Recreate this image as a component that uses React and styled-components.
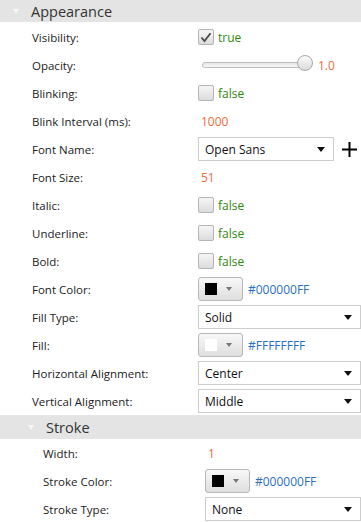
import React from "react";
import styled, { createGlobalStyle } from "styled-components";

const Global = createGlobalStyle`
  html, body { margin: 0; padding: 0; background: #fff; }
  body { font-family: "Open Sans", "Noto Sans", sans-serif; }
`;

const Panel = styled.div`
  width: 361px;
  height: 522px;
  overflow: hidden;
  background: #fff;
  display: flex;
  flex-direction: column;
`;

const Header = styled.div`
  height: ${(p) => p.$h}px;
  margin-bottom: ${(p) => p.$mb || 0}px;
  background: #e4e4e4;
  display: flex;
  align-items: center;
  padding-left: ${(p) => p.$indent}px;
  font-size: 14.5px;
  color: #333;
  flex-shrink: 0;
`;

const Arrow = styled.span`
  width: 0;
  height: 0;
  border-left: 3.5px solid transparent;
  border-right: 3.5px solid transparent;
  border-top: 5px solid #f6f6f6;
  margin-right: 12px;
`;

const Row = styled.div`
  height: 28px;
  display: grid;
  grid-template-columns: ${(p) => p.$label}px 1fr;
  align-items: center;
  padding-left: ${(p) => p.$indent}px;
  flex-shrink: 0;
`;

const Label = styled.span`
  font-size: 11.5px;
  color: #222;
`;

const Control = styled.div`
  display: flex;
  align-items: center;
  gap: 4px;
  min-width: 0;
`;

const Check = styled.span`
  width: 14px;
  height: 14px;
  border: 1px solid #b4b4b4;
  border-radius: 2px;
  background: linear-gradient(#f6f6f6, #dcdcdc);
  display: inline-flex;
  align-items: center;
  justify-content: center;
`;

const BoolText = styled.span`
  font-size: 12px;
  color: #2f8a0e;
`;

const Num = styled.span`
  font-size: 12px;
  color: #f06a3c;
  padding-left: ${(p) => p.$pl || 0}px;
`;

const Hex = styled.span`
  font-size: 12px;
  color: #2a6fc0;
`;

const Track = styled.div`
  position: relative;
  width: 104px;
  height: 4px;
  margin-left: 4px;
  border: 1px solid #bdbdbd;
  border-radius: 3px;
  background: linear-gradient(#e6e6e6, #f8f8f8);
`;

const Thumb = styled.span`
  position: absolute;
  right: -6px;
  top: -8px;
  width: 16px;
  height: 16px;
  border-radius: 50%;
  border: 1px solid #a9a9a9;
  background: linear-gradient(#fbfbfb, #dadada);
  box-sizing: border-box;
`;

const SliderWrap = styled.div`
  display: flex;
  align-items: center;
  gap: 10px;
`;

const Combo = styled.div`
  box-sizing: border-box;
  width: ${(p) => p.$w}px;
  height: 24px;
  border: 1px solid #cdcdcd;
  background: #fff;
  display: flex;
  align-items: center;
  justify-content: space-between;
  padding: 0 8px 0 6px;
  font-size: 12px;
  color: #111;
`;

const DownTri = styled.span`
  width: 0;
  height: 0;
  border-left: 4px solid transparent;
  border-right: 4px solid transparent;
  border-top: 5px solid #111;
`;

const ColorBtn = styled.div`
  box-sizing: border-box;
  width: 45px;
  height: 24px;
  border: 1px solid #b8b8b8;
  border-radius: 3px;
  background: linear-gradient(#f8f8f8, #dedede);
  display: flex;
  align-items: center;
  padding-left: 6px;
  gap: 9px;
  margin-right: 1px;
`;

const Swatch = styled.span`
  width: 12px;
  height: 12px;
  background: ${(p) => p.$c};
`;

const SmallTri = styled.span`
  width: 0;
  height: 0;
  border-left: 3.5px solid transparent;
  border-right: 3.5px solid transparent;
  border-top: 4px solid #777;
`;

const CheckMark = () => (
  <svg width="12" height="11" viewBox="0 0 12 11">
    <path d="M1.5 5.5 L4.5 9 L10.5 1.2" fill="none" stroke="#4a4a4a" strokeWidth="1.8" />
  </svg>
);

const Plus = () => (
  <svg width="17" height="17" viewBox="0 0 17 17" style={{ marginLeft: 3 }}>
    <path d="M8.5 1 V16 M1 8.5 H16" stroke="#000" strokeWidth="2" />
  </svg>
);

const Bool = ({ v }) => (
  <Control>
    <Check>{v && <CheckMark />}</Check>
    <BoolText>{v ? "true" : "false"}</BoolText>
  </Control>
);

const ColorField = ({ c, hex }) => (
  <Control>
    <ColorBtn>
      <Swatch $c={c} />
      <SmallTri />
    </ColorBtn>
    <Hex>{hex}</Hex>
  </Control>
);

const Sel = ({ w, v, plus }) => (
  <Control>
    <Combo $w={w}>
      <span>{v}</span>
      <DownTri />
    </Combo>
    {plus && <Plus />}
  </Control>
);

export default function App() {
  const A = { $label: 166, $indent: 32 };
  const S = { $label: 162, $indent: 43 };
  return (
    <Panel>
      <Global />
      <Header $h={22} $mb={1} $indent={13}>
        <Arrow />
        Appearance
      </Header>
      <Row {...A}><Label>Visibility:</Label><Bool v /></Row>
      <Row {...A}>
        <Label>Opacity:</Label>
        <SliderWrap>
          <Track><Thumb /></Track>
          <Num>1.0</Num>
        </SliderWrap>
      </Row>
      <Row {...A}><Label>Blinking:</Label><Bool /></Row>
      <Row {...A}><Label>Blink Interval (ms):</Label><Num $pl={3}>1000</Num></Row>
      <Row {...A}><Label>Font Name:</Label><Sel w={136} v="Open Sans" plus /></Row>
      <Row {...A}><Label>Font Size:</Label><Num $pl={3}>51</Num></Row>
      <Row {...A}><Label>Italic:</Label><Bool /></Row>
      <Row {...A}><Label>Underline:</Label><Bool /></Row>
      <Row {...A}><Label>Bold:</Label><Bool /></Row>
      <Row {...A}><Label>Font Color:</Label><ColorField c="#000" hex="#000000FF" /></Row>
      <Row {...A}><Label>Fill Type:</Label><Sel w={163} v="Solid" /></Row>
      <Row {...A}><Label>Fill:</Label><ColorField c="#fff" hex="#FFFFFFFF" /></Row>
      <Row {...A}><Label>Horizontal Alignment:</Label><Sel w={163} v="Center" /></Row>
      <Row {...A}><Label>Vertical Alignment:</Label><Sel w={163} v="Middle" /></Row>
      <Header $h={24} $indent={28}>
        <Arrow />
        Stroke
      </Header>
      <Row {...S}><Label>Width:</Label><Num $pl={3}>1</Num></Row>
      <Row {...S}><Label>Stroke Color:</Label><ColorField c="#000" hex="#000000FF" /></Row>
      <Row {...S}><Label>Stroke Type:</Label><Sel w={156} v="None" /></Row>
    </Panel>
  );
}
